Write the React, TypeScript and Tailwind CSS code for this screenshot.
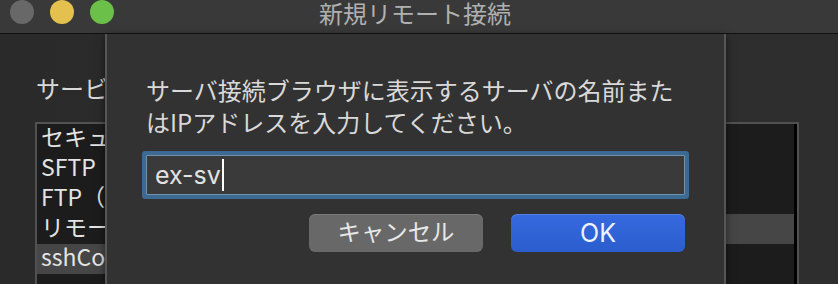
import React from 'react';

const jp = '[font-family:"Noto_Sans_CJK_JP","Noto_Sans",sans-serif]';

const leftRows = ['セキュアシェル', 'SFTP（SSH）', 'FTP（ファイル転送）', 'リモートデスクトップ', 'sshConfig'];

function TrafficLights() {
  return (
    <div className="absolute left-[10px] top-0 flex gap-[16px]">
      <div className="w-[24px] h-[24px] rounded-full bg-[#686868]" />
      <div className="w-[24px] h-[24px] rounded-full bg-[#e4c14e]" />
      <div className="w-[24px] h-[24px] rounded-full bg-[#6bc04a]" />
    </div>
  );
}

function ServiceList() {
  return (
    <div className="ml-[35px] w-[764px] flex-1 flex border-2 border-b-0 border-[#515151] bg-[#1c1c1c]">
      <div className="flex-1 flex flex-col">
        {leftRows.map((row, i) => (
          <div
            key={row}
            className={`h-[30px] pl-[4px] pb-[5px] flex items-center whitespace-nowrap text-[23px] text-[#e4e4e4] leading-none ${i === 4 ? 'bg-[#464646]' : ''}`}
          >
            {row}
          </div>
        ))}
      </div>
      <div className="w-[70px] flex flex-col">
        {leftRows.map((row, i) => (
          <div key={row} className={`h-[30px] ${i === 3 ? 'bg-[#464646]' : ''}`} />
        ))}
      </div>
      <div className="w-[3px] bg-black" />
    </div>
  );
}

function Sheet() {
  return (
    <div className="absolute left-[105px] top-0 bottom-0 w-[621px] border-x-2 border-[#565656] bg-[#323232] px-[39px] pt-[40px] shadow-[0_2px_8px_rgba(0,0,0,0.5)]">
      <p className="text-[24px] leading-[32px] text-[#d9d9d9] whitespace-nowrap">
        サーバ接続ブラウザに表示するサーバの名前また
        <br />
        はIPアドレスを入力してください。
      </p>
      <div className="mt-[17px] h-[40px] border border-[#7091ad] bg-[#3a3a3a] shadow-[0_0_0_4px_#3d6a93] rounded-[1px] flex items-center pl-[8px]">
        <span className="[font-family:Inter,'Liberation_Sans',sans-serif] text-[25px] leading-none text-[#e2e2e2]">ex-sv</span>
        <span className="ml-[1px] w-[2px] h-[32px] bg-white" />
      </div>
      <div className="mt-[19px] flex justify-end gap-[28px]">
        <button className="w-[174px] h-[38px] pb-[2px] rounded-[6px] bg-[#686868] shadow-[inset_0_1px_0_rgba(255,255,255,0.12)] text-[23.4px] leading-none text-[#e8e8e8]">
          キャンセル
        </button>
        <button className="w-[174px] h-[38px] rounded-[6px] bg-gradient-to-b from-[#3569de] to-[#2b5dcd] shadow-[inset_0_1px_0_rgba(255,255,255,0.15)] [font-family:Inter,'Liberation_Sans',sans-serif] text-[25px] leading-none text-[#eef2ff]">
          OK
        </button>
      </div>
    </div>
  );
}

export default function App() {
  return (
    <div className={`w-[838px] h-[284px] overflow-hidden flex flex-col bg-[#2b2b2b] ${jp}`}>
      <div className="relative h-[34px] shrink-0 border-b border-[#111111] bg-[#393939] flex items-start justify-center">
        <TrafficLights />
        <span className="text-[24px] leading-[26px] text-[#b0b0b0] -ml-[8px]">新規リモート接続</span>
      </div>
      <div className="relative flex-1 flex flex-col bg-gradient-to-r from-[#2a2a2a] to-[#2e2e2e]">
        <div className="pl-[36px] pt-[38px] h-[88px] text-[24px] leading-[32px] text-[#d9d9d9] whitespace-nowrap">
          サービスを選択してください：
        </div>
        <ServiceList />
        <Sheet />
      </div>
    </div>
  );
}
